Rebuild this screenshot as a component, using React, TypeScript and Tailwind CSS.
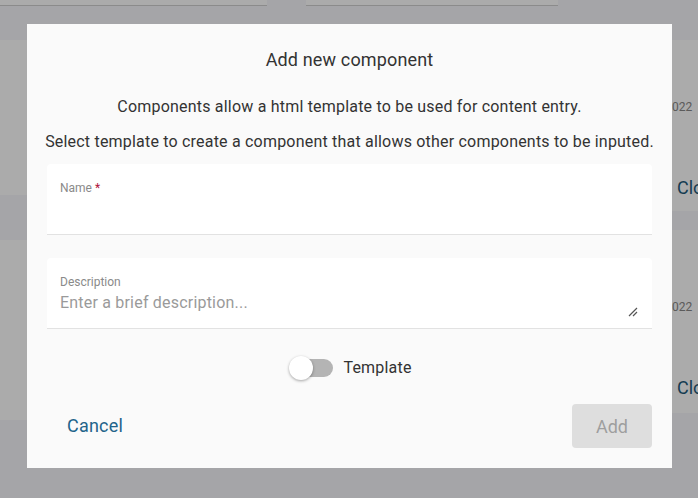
import React from "react";

const font = { fontFamily: "Roboto, 'Noto Sans', sans-serif" };

function BackgroundPage() {
  return (
    <div className="h-[498px] w-[698px] overflow-hidden bg-[#f6f7fb]">
      <div className="flex gap-[39px]">
        <div className="h-[6px] w-[267px] border-b border-[#cfcfcf] bg-white" />
        <div className="h-[6px] w-[252px] border-b border-[#cfcfcf] bg-white" />
      </div>
      <div className="mt-[34px] flex justify-between">
        <div className="flex w-[300px] flex-col gap-[45px]">
          <div className="h-[155px] bg-white" />
          <div className="h-[180px] bg-white" />
        </div>
        <div className="flex w-[300px] flex-col gap-[19px]">
          <div className="flex h-[171px] flex-col items-end bg-white">
            <div className="mt-[58px] w-[26px] text-[12px] text-[#888]">022</div>
            <div className="mt-[58px] w-[21px] overflow-hidden text-[18px] text-[#1f5a7a]">Close</div>
          </div>
          <div className="flex h-[183px] flex-col items-end bg-white">
            <div className="mt-[68px] w-[26px] text-[12px] text-[#888]">022</div>
            <div className="mt-[58px] w-[21px] overflow-hidden text-[18px] text-[#1f5a7a]">Close</div>
          </div>
        </div>
      </div>
    </div>
  );
}

export default function App() {
  return (
    <div className="relative h-[498px] w-[698px] overflow-hidden" style={font}>
      <BackgroundPage />
      <div className="absolute inset-0 bg-black/[0.33]">
        <div className="ml-[27px] mt-[24px] flex h-[444px] w-[645px] flex-col bg-[#fafafa] px-[20px]">
          <h2 className="mt-[24px] text-center text-[18px] leading-[24px] tracking-[0.15px] text-[#333]">Add new component</h2>
          <p className="mt-[25px] text-center text-[16px] leading-[20px] tracking-[0.2px] text-[#333]">
            Components allow a html template to be used for content entry.
          </p>
          <p className="-mx-[10px] mt-[15px] whitespace-nowrap text-center text-[16px] leading-[20px] tracking-[0.2px] text-[#333]">
            Select template to create a component that allows other components to be inputed.
          </p>

          <div className="mt-[12px] h-[71px] rounded-t-[4px] border-b border-[#e2e2e2] bg-white px-[13px] pt-[16px]">
            <div className="text-[12px] leading-[16px] text-[#8a8a8a]">
              Name <span className="text-[#b0143c]">*</span>
            </div>
          </div>

          <div className="relative mt-[23px] h-[71px] rounded-t-[4px] border-b border-[#e2e2e2] bg-white px-[13px] pt-[16px]">
            <div className="text-[12px] leading-[16px] text-[#8a8a8a]">Description</div>
            <div className="mt-[3px] text-[16px] leading-[20px] tracking-[0.2px] text-[#9a9a9a]">Enter a brief description...</div>
            <svg className="absolute bottom-[11px] right-[14px]" width="10" height="10" viewBox="0 0 10 10">
              <path d="M9 1 L1 9 M9 5 L5 9" stroke="#555" strokeWidth="1.2" fill="none" />
            </svg>
          </div>

          <div className="mt-[29px] flex items-center justify-center gap-[10px] pl-[2px]">
            <div className="relative h-[18px] w-[44px]">
              <div className="absolute left-[3px] top-0 h-[18px] w-[41px] rounded-full bg-[#b4b4b4]" />
              <div className="absolute -top-[3px] left-0 h-[24px] w-[24px] rounded-full bg-white shadow-[0_1px_3px_rgba(0,0,0,0.35)]" />
            </div>
            <span className="text-[16px] leading-[20px] tracking-[0.2px] text-[#333]">Template</span>
          </div>

          <div className="mt-[26px] flex items-center justify-between">
            <button className="ml-[20px] text-[18px] leading-[24px] tracking-[0.2px] text-[#23648a]">Cancel</button>
            <button className="h-[44px] w-[80px] rounded-[4px] bg-[#dedede] text-[18px] text-[#9e9e9e]">Add</button>
          </div>
        </div>
      </div>
    </div>
  );
}
